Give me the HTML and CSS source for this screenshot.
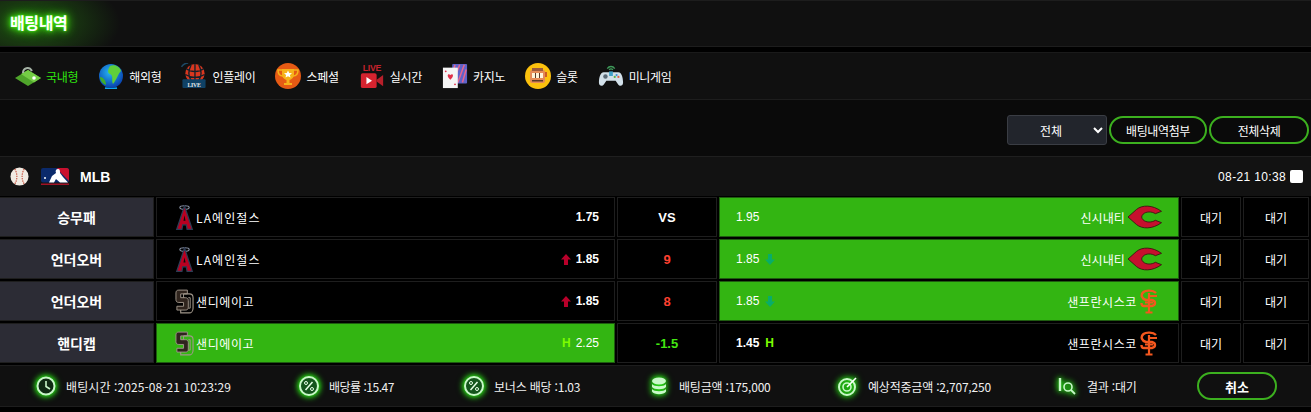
FILE: index.html
```html
<!DOCTYPE html>
<html lang="ko">
<head>
    <meta charset="UTF-8">
    <title>배팅내역</title>
    <link rel="stylesheet" href="styles.css">
</head>
<body>
    <svg class="defs" width="0" height="0">
        <defs>
            <radialGradient id="globe" cx="45%" cy="35%" r="70%">
                <stop offset="0" stop-color="#27b6f5"/>
                <stop offset="1" stop-color="#0537a8"/>
            </radialGradient>
            <symbol id="reds" viewBox="0 0 36 24">
                <path d="M0 12 L9 4 C15 -1 26 -1 35.500 6 L29 8.500 C25 6 19 6 16 9 C14 11 14 13 16 15 C19 18 25 18 29 15.500 L35.500 18 C26 25 15 25 9 20 Z" fill="#c6102e" stroke="#33180f" stroke-width=".9"/>
            </symbol>
            <symbol id="angels" viewBox="0 0 16 24">
                <ellipse cx="8" cy="2.500" rx="4.500" ry="1.700" fill="none" stroke="#8a93a6" stroke-width="1"/>
                <path d="M8 1 L15.500 23.500 H10.500 L9.700 19 H6.300 L5.500 23.500 H.5 Z" fill="#ba0021" stroke="#2e3c55" stroke-width="1.200"/>
                <path d="M7 15 H9 L8 10 Z" fill="#0b0b0b"/>
            </symbol>
            <symbol id="padres" viewBox="0 0 20 26">
                <path d="M13 1 H4 C2 1 1 2 1 4 V11 C1 13 2 14 4 14 H9 V18 H2 V22 H11 C13 22 14 21 14 19 V12 C14 10 13 9 11 9 H6 V5 H13 Z" fill="#2f241d" stroke="#a0968a" stroke-width="1"/>
                <path d="M9 5 H15 C18 5 19 7 19 9 V20 C19 23 17 25 15 25 H6 V22" fill="none" stroke="#a0968a" stroke-width="1.200"/>
                <path d="M9 5 V9 M14 9 H16 V20 H14" fill="none" stroke="#a0968a" stroke-width="1"/>
            </symbol>
            <symbol id="giants" viewBox="0 0 18 25">
                <path d="M16 4 C13 1 6 1 3.500 3 C0 6 2 10 6 11 H12 C16 12 16 16 12 17 H4 C2 17 1.500 16 1.500 14" fill="none" stroke="#f4571e" stroke-width="2.400"/>
                <path d="M9 4 V23 M5.500 23.500 H12.500 M5 13.500 H13 M9 7 H17" fill="none" stroke="#f4571e" stroke-width="2.200"/>
            </symbol>
            <symbol id="percent" viewBox="0 0 22 22">
                <circle cx="11" cy="11" r="9" fill="#14551c" stroke="#c8f8c8" stroke-width="2"/>
                <path d="M14.500 7 L7.500 15" stroke="#e6ffe6" stroke-width="1.500"/>
                <circle cx="8" cy="8" r="1.500" fill="none" stroke="#e6ffe6"/>
                <circle cx="14" cy="14" r="1.500" fill="none" stroke="#e6ffe6"/>
            </symbol>
            <symbol id="arrow-up" viewBox="0 0 10 11">
                <path d="M5 0 L10 5.500 H7 V11 H3 V5.500 H0 Z" fill="currentColor"/>
            </symbol>
            <symbol id="arrow-down" viewBox="0 0 10 11">
                <path d="M5 11 L10 5.500 H7 V0 H3 V5.500 H0 Z" fill="currentColor"/>
            </symbol>
        </defs>
    </svg>

    <header class="title-bar">
        <h1 class="title">배팅내역</h1>
    </header>

    <nav class="tabs">
        <a class="tab active">
            <svg class="tab-icon" viewBox="0 0 26 22">
                <path d="M13 5 L26 13 L13 21 L0 13 Z" fill="#4fa52b"/>
                <path d="M13 5 L26 13 L19 17.500 L6 9 Z" fill="#74cc45"/>
                <path d="M8 8 C8 3 14 1 17 6" fill="none" stroke="#a5b3a5" stroke-width="2"/>
                <circle cx="19" cy="13" r="1.800" fill="#fff"/>
            </svg>
            국내형
        </a>
        <a class="tab">
            <svg class="tab-icon" viewBox="0 0 26 26">
                <circle cx="13" cy="13" r="12" fill="url(#globe)"/>
                <path d="M12 3 C17 1 22 4 23 8 C20 11 19 16 15 21 C13 17 16 13 12 11 C9 10 10 6 12 3 Z" fill="#5fcf3a"/>
                <path d="M2 14 C5 14 8 17 8 22 C5 21 2 18 2 14 Z" fill="#3fae2c"/>
                <path d="M7 25 C11 26 15 26 19 25" fill="none" stroke="#0ea6f0" stroke-width="1.500"/>
            </svg>
            해외형
        </a>
        <a class="tab">
            <svg class="tab-icon" viewBox="0 0 26 27">
                <circle cx="14" cy="11" r="10" fill="#d9371f"/>
                <path d="M5 6 C10 10 18 10 23 6 M4 12 C10 16 18 16 24 12 M10 2 C7 8 7 14 10 18 M18 2 C21 8 21 14 18 18 M14 1 V18" fill="none" stroke="#13202a" stroke-width="1.400"/>
                <path d="M0 4 C2 1 5 0 7 0" fill="none" stroke="#1d4a66" stroke-width="1.500"/>
                <rect x="1" y="17" width="24" height="9" rx="1" fill="#0f4165"/>
                <text class="live-mini" x="13" y="24.500" text-anchor="middle">LIVE</text>
            </svg>
            인플레이
        </a>
        <a class="tab">
            <svg class="tab-icon" viewBox="0 0 26 26">
                <circle cx="13" cy="13" r="13" fill="#e65a14"/>
                <path d="M7 6 H19 V11 C19 15 16 17 13 17 C10 17 7 15 7 11 Z" fill="#f6b21b"/>
                <path d="M7 7 H3 C3 11 5 13 8 13 M19 7 H23 C23 11 21 13 18 13" fill="none" stroke="#f6b21b" stroke-width="1.500"/>
                <path d="M11.500 16 H14.500 V20 H17 V22 H9 V20 H11.500 Z" fill="#f6b21b"/>
                <path d="M13 7.500 L14.200 10 L17 10.300 L14.900 12 L15.500 14.600 L13 13.200 L10.500 14.600 L11.100 12 L9 10.300 L11.800 10 Z" fill="#fff"/>
            </svg>
            스페셜
        </a>
        <a class="tab">
            <svg class="tab-icon" viewBox="0 0 26 28">
                <text class="live-big" x="3" y="9">LIVE</text>
                <rect x="1" y="11" width="17" height="16" rx="2" fill="#d6232f"/>
                <path d="M7 15 L13 19 L7 23 Z" fill="#fff"/>
                <path d="M18 18 L25 13 V25 L18 20 Z" fill="#b81f2a"/>
            </svg>
            실시간
        </a>
        <a class="tab">
            <svg class="tab-icon" viewBox="0 0 28 26">
                <rect x="11" y="0" width="16" height="21" rx="1" fill="#5f63c9"/>
                <path d="M14 1 L12 8 M19 1 L13 17 M24 1 L17 20 M26 6 L22 20" stroke="#e8668d" stroke-width="1.600"/>
                <rect x="1" y="4" width="16" height="22" fill="#f4f4f4"/>
                <path d="M9 17 C5 13 6 11 7.500 11 C8.300 11 9 12 9 12 C9 12 9.700 11 10.500 11 C12 11 13 13 9 17 Z" fill="#e0304a"/>
                <circle cx="4" cy="8" r="1" fill="#e0304a"/>
                <circle cx="14" cy="22" r="1" fill="#e0304a"/>
            </svg>
            카지노
        </a>
        <a class="tab">
            <svg class="tab-icon" viewBox="0 0 26 26">
                <circle cx="13" cy="13" r="13" fill="#fcc10d"/>
                <rect x="5" y="7" width="15" height="13" rx="2" fill="#e58a56"/>
                <rect x="7" y="5" width="11" height="3" fill="#9c5a3c"/>
                <rect x="7" y="10" width="11" height="5" fill="#fff3d8"/>
                <path d="M10.500 10 V15 M14.500 10 V15" stroke="#5a3a2a"/>
                <rect x="7" y="17" width="11" height="1.500" fill="#5a3a2a"/>
                <path d="M21 9 V14" stroke="#c0392b" stroke-width="1.500"/>
            </svg>
            슬롯
        </a>
        <a class="tab">
            <svg class="tab-icon" viewBox="0 0 28 26">
                <path d="M10 5 C12 2 16 2 18 5 M12 6.500 C13 5 15 5 16 6.500" fill="none" stroke="#3f9a5a" stroke-width="1.400"/>
                <path d="M6 9 H22 C25 9 27 14 27 20 C27 24 23 25 21 21 L19 18 H9 L7 21 C5 25 1 24 1 20 C1 14 3 9 6 9 Z" fill="#d3e1ea"/>
                <circle cx="8" cy="13.500" r="2.400" fill="#5b6b78"/>
                <circle cx="20" cy="12" r="1.200" fill="#3f8fd8"/>
                <circle cx="22" cy="14" r="1.200" fill="#e0604a"/>
                <circle cx="18" cy="14" r="1.200" fill="#57b04a"/>
                <rect x="12" y="8" width="4" height="5" fill="#3fa0c8"/>
            </svg>
            미니게임
        </a>
    </nav>

    <div class="toolbar">
        <select class="filter">
            <option>전체</option>
        </select>
        <button class="btn-outline">배팅내역첨부</button>
        <button class="btn-outline">전체삭제</button>
    </div>

    <div class="league">
        <svg class="ball" viewBox="0 0 20 20">
            <circle cx="10" cy="10" r="9.500" fill="#f1ebe3"/>
            <path d="M5 2 C8 7 8 13 5 18 M15 2 C12 7 12 13 15 18" fill="none" stroke="#c8533f" stroke-width="1.200" stroke-dasharray="1.500 1"/>
        </svg>
        <svg class="mlb" viewBox="0 0 28 17">
            <rect width="28" height="14.500" rx="2" fill="#0b2a6b"/>
            <path d="M16 0 H26 C27 0 28 1 28 2 V13 L23 8 L20 5 Z" fill="#c8102e"/>
            <path d="M17 1 C15 1 14 3 15 5 L11 8 L8 14.500 H13 L15 11 L19 14.500 H27 L22 9 L19 5 C19 3 19 1 17 1 Z" fill="#fff"/>
            <circle cx="4" cy="10" r="1" fill="#fff"/>
            <rect y="15.500" width="28" height="1.500" fill="#a01226"/>
        </svg>
        <span class="league-name">MLB</span>
        <span class="league-time">08-21 10:38</span>
        <input type="checkbox" class="league-check">
    </div>

    <div class="bets">
        <div class="bet-row">
            <div class="cell kind">승무패</div>
            <div class="cell side">
                <svg class="logo"><use href="#angels"/></svg>
                <span class="team team-wide">LA에인절스</span>
                <span class="odds">1.75</span>
            </div>
            <div class="cell mid">VS</div>
            <div class="cell side away on">
                <span class="odds">1.95</span>
                <span class="team team-tight">신시내티</span>
                <svg class="logo logo-reds"><use href="#reds"/></svg>
            </div>
            <div class="cell wait">대기</div>
            <div class="cell wait">대기</div>
        </div>
        <div class="bet-row">
            <div class="cell kind">언더오버</div>
            <div class="cell side">
                <svg class="logo"><use href="#angels"/></svg>
                <span class="team team-wide">LA에인절스</span>
                <svg class="arrow up"><use href="#arrow-up"/></svg>
                <span class="odds">1.85</span>
            </div>
            <div class="cell mid red">9</div>
            <div class="cell side away on">
                <span class="odds">1.85</span>
                <svg class="arrow down"><use href="#arrow-down"/></svg>
                <span class="team team-tight">신시내티</span>
                <svg class="logo logo-reds"><use href="#reds"/></svg>
            </div>
            <div class="cell wait">대기</div>
            <div class="cell wait">대기</div>
        </div>
        <div class="bet-row">
            <div class="cell kind">언더오버</div>
            <div class="cell side">
                <svg class="logo"><use href="#padres"/></svg>
                <span class="team">샌디에이고</span>
                <svg class="arrow up"><use href="#arrow-up"/></svg>
                <span class="odds">1.85</span>
            </div>
            <div class="cell mid red">8</div>
            <div class="cell side away on">
                <span class="odds">1.85</span>
                <svg class="arrow down"><use href="#arrow-down"/></svg>
                <span class="team">샌프란시스코</span>
                <svg class="logo logo-giants"><use href="#giants"/></svg>
            </div>
            <div class="cell wait">대기</div>
            <div class="cell wait">대기</div>
        </div>
        <div class="bet-row">
            <div class="cell kind">핸디캡</div>
            <div class="cell side on">
                <svg class="logo"><use href="#padres"/></svg>
                <span class="team">샌디에이고</span>
                <span class="hcap">H</span>
                <span class="odds">2.25</span>
            </div>
            <div class="cell mid green">-1.5</div>
            <div class="cell side away">
                <span class="odds">1.45</span>
                <span class="hcap">H</span>
                <span class="team">샌프란시스코</span>
                <svg class="logo logo-giants"><use href="#giants"/></svg>
            </div>
            <div class="cell wait">대기</div>
            <div class="cell wait">대기</div>
        </div>
    </div>

    <footer class="summary">
        <div class="stat stat-time">
            <svg class="stat-icon" viewBox="0 0 22 22">
                <circle cx="11" cy="11" r="8.500" fill="#0f2a12" stroke="#c8f8c8" stroke-width="2"/>
                <path d="M11 6 V11.500 L15 14" fill="none" stroke="#c8f8c8" stroke-width="1.600"/>
            </svg>
            배팅시간 :2025-08-21 10:23:29
        </div>
        <div class="stat stat-rate">
            <svg class="stat-icon"><use href="#percent"/></svg>
            배당률 :15.47
        </div>
        <div class="stat stat-bonus">
            <svg class="stat-icon"><use href="#percent"/></svg>
            보너스 배당 :1.03
        </div>
        <div class="stat stat-amount">
            <svg class="stat-icon" viewBox="0 0 22 22">
                <ellipse cx="11" cy="6" rx="7" ry="3.500" fill="#c9f9c9"/>
                <path d="M4 9 C6 12 16 12 18 9 V12 C16 15 6 15 4 12 Z" fill="#c9f9c9"/>
                <path d="M4 14 C6 17 16 17 18 14 V16.500 C16 20 6 20 4 16.500 Z" fill="#c9f9c9"/>
            </svg>
            배팅금액 :175,000
        </div>
        <div class="stat stat-win">
            <svg class="stat-icon" viewBox="0 0 22 22">
                <circle cx="10" cy="12" r="8" fill="none" stroke="#c8f8c8" stroke-width="2"/>
                <circle cx="10" cy="12" r="4" fill="none" stroke="#c8f8c8" stroke-width="1.600"/>
                <path d="M10 12 L19 3" stroke="#fff" stroke-width="1.600"/>
            </svg>
            예상적중금액 :2,707,250
        </div>
        <div class="stat stat-result">
            <svg class="stat-icon" viewBox="0 0 22 22">
                <path d="M4 3 V16" stroke="#c8f8c8" stroke-width="2.400"/>
                <circle cx="12" cy="12" r="4" fill="none" stroke="#c8f8c8" stroke-width="1.600"/>
                <path d="M15 15 L19 19" stroke="#c8f8c8" stroke-width="1.800"/>
            </svg>
            결과 :대기
        </div>
        <button class="btn-cancel">취소</button>
    </footer>
</body>
</html>
```

FILE: styles.css
```css
* {
    box-sizing: border-box;
}
body {
    margin: 0;
    background: #000;
    color: #fff;
    font-family: "Noto Sans CJK KR", "Liberation Sans", sans-serif;
    font-size: 12px;
    height: 412px;
    overflow: hidden;
}
.defs {
    position: absolute;
}

.title-bar {
    height: 47px;
    background: #101010;
    border-top: 1px solid #1d1d1d;
    border-bottom: 1px solid #1d1d1d;
    background-image: radial-gradient(ellipse 90px 48px at 30px 22px, rgba(50, 170, 20, 0.45), rgba(50, 170, 20, 0) 100%);
    display: flex;
    align-items: center;
    padding: 0 0 4px 10px;
}
.title {
    margin: 0;
    font-size: 16px;
    font-weight: 700;
    letter-spacing: -0.4px;
    text-shadow: 0 0 2px #4dff1a, 0 0 5px #3fe010, 0 0 8px #3fe010, 0 0 12px #3fe010;
}

.tabs {
    margin-top: 5px;
    height: 48px;
    background: #101010;
    border-top: 1px solid #1a1a1a;
    border-bottom: 1px solid #1d1d1d;
    display: flex;
    align-items: center;
    padding-left: 15px;
}
.tab {
    display: flex;
    align-items: center;
    gap: 5px;
    margin-right: 20px;
    letter-spacing: -0.3px;
    color: #fff;
}
.tab.active {
    color: #2fe50f;
}
.tab-icon {
    width: 26px;
    height: 26px;
}
.live-mini {
    font-size: 6px;
    font-weight: 700;
    fill: #e8e8e8;
    font-family: "Liberation Serif", serif;
}
.live-big {
    font-size: 9.500px;
    font-weight: 700;
    fill: #c5222c;
    font-family: "Liberation Sans", sans-serif;
}

.toolbar {
    height: 56px;
    background: #0a0a0a;
    display: flex;
    justify-content: flex-end;
    align-items: center;
    gap: 2px;
    padding: 4px 2px 0 0;
}
.filter {
    width: 100px;
    height: 30px;
    background: #22252c;
    border: 1px solid #3a3d44;
    border-radius: 3px;
    color: #fff;
    font-family: inherit;
    font-size: 12px;
    text-align: center;
}
.btn-outline {
    width: 98px;
    height: 28px;
    background: #0a0a0a;
    border: 2px solid #3cb01f;
    border-radius: 14px;
    color: #fff;
    font-family: inherit;
    font-size: 12px;
    letter-spacing: -0.4px;
    padding: 0;
}
.btn-outline:last-child {
    width: 100px;
}

.league {
    height: 40px;
    background: #121212;
    border-top: 1px solid #1f1f1f;
    display: flex;
    align-items: center;
    padding: 0 8px 0 10px;
}
.ball {
    width: 19px;
    height: 19px;
}
.mlb {
    width: 28px;
    height: 17px;
    margin-left: 12px;
}
.league-name {
    margin-left: 11px;
    font-size: 14px;
    font-weight: 700;
    font-family: "Liberation Sans", sans-serif;
}
.league-time {
    margin-left: auto;
    font-family: "Liberation Sans", sans-serif;
    font-size: 12px;
    letter-spacing: 0.35px;
}
.league-check {
    width: 13px;
    height: 13px;
    margin: 0 0 0 4px;
    appearance: none;
    background: #fff;
    border-radius: 2px;
}

.bets {
    padding-top: 1px;
    display: flex;
    flex-direction: column;
    gap: 2px;
}
.bet-row {
    display: grid;
    grid-template-columns: 154px 459px 100px 460px 60px 66px;
    column-gap: 2px;
    height: 40px;
    padding-right: 2px;
}
.cell {
    display: flex;
    align-items: center;
    justify-content: center;
    background: #000;
    border: 1px solid #1e1e1e;
}
.kind {
    background: #2c2c35;
    font-size: 14px;
    font-weight: 700;
    border-left: 0;
}
.side {
    justify-content: flex-start;
    padding: 0 15px 0 18px;
    gap: 2px;
}
.side.on {
    background: #33b512;
    border-color: #1f5c10;
}
.away {
    padding: 0 16px 0 16px;
    gap: 3px;
}
.side .arrow,
.side .hcap {
    margin-left: auto;
    margin-right: 3px;
}
.side .odds {
    font-weight: 700;
    font-family: "Liberation Sans", sans-serif;
}
.side > .team + .odds {
    margin-left: auto;
}
.side.on .odds {
    font-weight: 400;
}
.away .arrow,
.away .hcap {
    margin-left: 3px;
    margin-right: 0;
}
.away .team {
    margin-left: auto;
}
.team {
    letter-spacing: 0.6px;
}
.team-wide {
    letter-spacing: 1.1px;
}
.team-tight {
    letter-spacing: 0.1px;
}
.logo {
    flex: none;
    width: 19px;
    height: 25px;
}
.logo-reds {
    width: 34px;
    height: 24px;
}
.logo-giants {
    width: 18px;
    height: 25px;
    margin-right: 4px;
}
.arrow {
    width: 10px;
    height: 11px;
    flex: none;
}
.arrow.up {
    color: #b8002a;
}
.arrow.down {
    color: #08ad6a;
}
.hcap {
    color: #7cfc00;
    font-family: "Liberation Sans", sans-serif;
    font-weight: 700;
    font-size: 12px;
}
.mid {
    font-size: 13px;
    font-weight: 700;
    font-family: "Liberation Sans", sans-serif;
}
.mid.red {
    color: #ff4030;
}
.mid.green {
    color: #43e612;
}

.summary {
    margin-top: 2px;
    height: 42px;
    background: #101010;
    border-top: 1px solid #1d1d1d;
    border-bottom: 1px solid #1d1d1d;
    display: flex;
    align-items: center;
}
.stat {
    display: flex;
    align-items: center;
    gap: 9px;
    color: #f0f0f0;
    letter-spacing: -0.2px;
    white-space: nowrap;
}
.stat-icon {
    width: 22px;
    height: 22px;
    filter: drop-shadow(0 0 3px #26d414) drop-shadow(0 0 2px #26d414);
}
.stat-time {
    width: 298px;
    padding-left: 35px;
    letter-spacing: 0.1px;
}
.stat-rate {
    width: 165px;
    letter-spacing: -0.5px;
}
.stat-bonus {
    width: 185px;
}
.stat-amount {
    width: 189px;
}
.stat-win {
    width: 219px;
}
.stat-result {
    width: 141px;
}
.btn-cancel {
    width: 80px;
    height: 28px;
    background: #101010;
    border: 2px solid #3cb01f;
    border-radius: 14px;
    color: #fff;
    font-family: inherit;
    font-size: 13px;
    font-weight: 700;
    padding: 0;
}
```
